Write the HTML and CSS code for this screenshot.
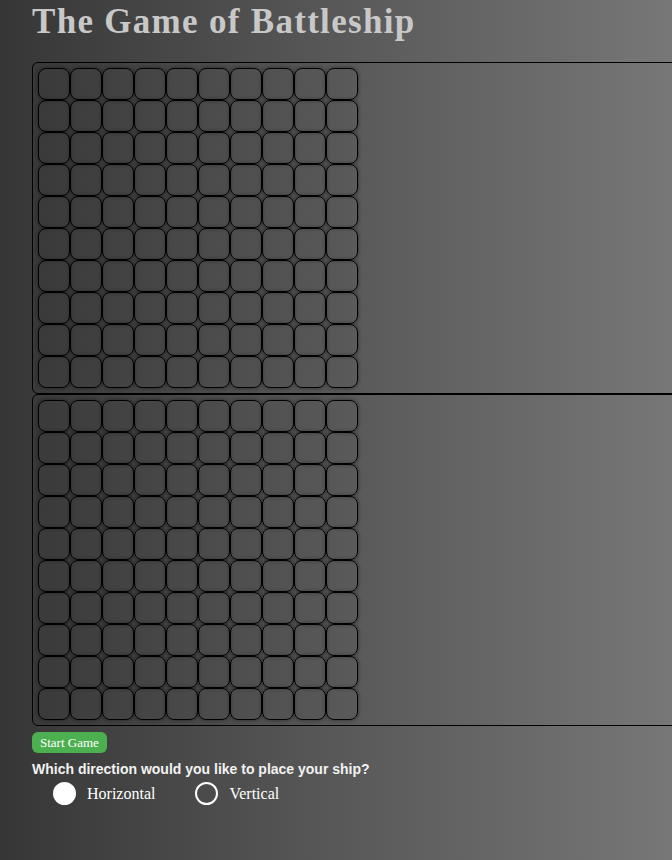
FILE: index.html
```html
<!DOCTYPE html>
<html>
<head>
<meta charset="utf-8">
<title>Battleship</title>
<link rel="stylesheet" href="styles.css">
</head>
<body>
<h1 class="title">The Game of Battleship</h1>
<div class="board" id="board1"></div>
<div class="board" id="board2"></div>
<button class="start-btn">Start Game</button>
<p class="question">Which direction would you like to place your ship?</p>
<div class="options">
  <label class="option"><span class="radio checked"></span><span class="opt-label">Horizontal</span></label>
  <label class="option"><span class="radio"></span><span class="opt-label">Vertical</span></label>
</div>
<script>
  document.querySelectorAll('.board').forEach(function (b) {
    for (var i = 0; i < 100; i++) {
      var c = document.createElement('div');
      c.className = 'cell';
      b.appendChild(c);
    }
  });
</script>
</body>
</html>
```
FILE: styles.css
```css
html {
  overflow: hidden;
  height: 100%;
  background: linear-gradient(to right, #363636 0%, #555 45%, #777 100%);
}
body {
  margin: 0;
  padding: 0 0 0 32px;
  min-height: 100%;
  font-family: "Liberation Serif", serif;
  color: #fff;
}
.title {
  margin: 0;
  padding-top: 2px;
  font-family: "Liberation Serif", serif;
  font-weight: bold;
  font-size: 35px;
  line-height: 40px;
  color: #c8c8c8;
  height: 60px;
  letter-spacing: 1.3px;
}
.board {
  width: 700px;
  box-sizing: border-box;
  border: 1px solid #000;
  border-radius: 6px 0 0 6px;
  padding: 5px;
  display: grid;
  grid-template-columns: repeat(10, 32px);
  grid-auto-rows: 32px;
}
.cell {
  box-sizing: border-box;
  border: 1px solid #000;
  border-radius: 8px;
  box-shadow: 0 0 4px rgba(0, 0, 0, 0.5);
}
.start-btn {
  display: block;
  margin-top: 6px;
  height: 21px;
  padding: 0 8px;
  border: none;
  border-radius: 6px;
  background: #4caf50;
  color: #fff;
  font-family: "Liberation Serif", serif;
  font-size: 13px;
}
.question {
  margin: 8px 0 0;
  font-family: "Liberation Sans", Arial, sans-serif;
  font-weight: bold;
  font-size: 14px;
  color: #f2f2f2;
}
.options {
  display: flex;
  gap: 40px;
  padding-left: 21px;
  margin-top: 5px;
}
.option {
  display: flex;
  align-items: center;
  gap: 11px;
}
.radio {
  width: 23px;
  height: 23px;
  box-sizing: border-box;
  border-radius: 50%;
  border: 2px solid #fff;
}
.radio.checked {
  background: #fff;
}
.opt-label {
  font-family: "Liberation Serif", serif;
  font-size: 16px;
  color: #fff;
}
```
